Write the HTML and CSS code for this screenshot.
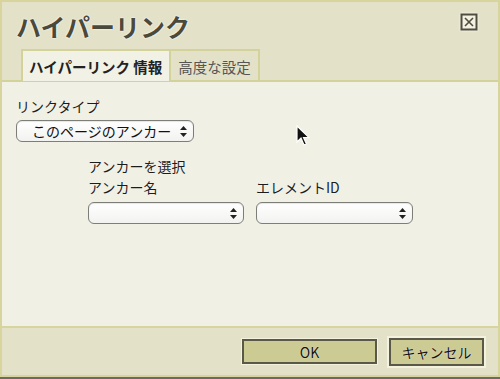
FILE: index.html
```html
<!DOCTYPE html>
<html lang="ja">
<head>
    <meta charset="UTF-8">
    <title>ハイパーリンク</title>
    <link rel="stylesheet" href="styles.css">
</head>
<body>
    <div class="dialog">
        <div class="header">
            <div class="title-row">
                <h1 class="title">ハイパーリンク</h1>
                <button class="close" title="閉じる">
                    <svg width="18" height="18" viewBox="0 0 18 18">
                        <rect x="1.5" y="1.5" width="15" height="15" fill="#f2f1e2" stroke="#4e4d3e" stroke-width="2"/>
                        <path d="M5 5 L13 13 M13 5 L5 13" stroke="#4e4d3e" stroke-width="1.6"/>
                    </svg>
                </button>
            </div>
            <div class="tabs">
                <div class="tab active">ハイパーリンク 情報</div>
                <div class="tab">高度な設定</div>
            </div>
        </div>

        <div class="panel">
            <label class="label">リンクタイプ</label>
            <div class="select select-type">
                <span>このページのアンカー</span>
                <svg class="arrows" width="7" height="11" viewBox="0 0 7 11"><path d="M3.5 0 L7 4 L0 4 Z M3.5 11 L7 7 L0 7 Z" fill="#222"/></svg>
            </div>

            <div class="anchor">
                <div class="label">アンカーを選択</div>
                <div class="anchor-grid">
                    <div class="field">
                        <label class="label">アンカー名</label>
                        <div class="select">
                            <span></span>
                            <svg class="arrows" width="7" height="11" viewBox="0 0 7 11"><path d="M3.5 0 L7 4 L0 4 Z M3.5 11 L7 7 L0 7 Z" fill="#222"/></svg>
                        </div>
                    </div>
                    <div class="field">
                        <label class="label">エレメントID</label>
                        <div class="select">
                            <span></span>
                            <svg class="arrows" width="7" height="11" viewBox="0 0 7 11"><path d="M3.5 0 L7 4 L0 4 Z M3.5 11 L7 7 L0 7 Z" fill="#222"/></svg>
                        </div>
                    </div>
                </div>
            </div>

            <svg class="cursor" width="14" height="22" viewBox="0 0 14 22">
                <path d="M1 1 L1 17 L5 13 L8 20 L10.5 19 L7.5 12.5 L13 12.5 Z" fill="#111" stroke="#fff" stroke-width="1.2"/>
            </svg>
        </div>

        <div class="footer">
            <button class="btn btn-ok">OK</button>
            <button class="btn btn-cancel">キャンセル</button>
        </div>
    </div>
</body>
</html>
```

FILE: styles.css
```css
body {
    margin: 0;
    background-color: #6b6b63;
    font-family: "Noto Sans CJK JP", "Liberation Sans", sans-serif;
    color: #222;
}
.dialog {
    width: 500px;
    height: 377px;
    box-sizing: border-box;
    border: 2px solid #d7d59d;
    background-color: #e3e2c8;
    display: flex;
    flex-direction: column;
}
.header {
    height: 78px;
    display: flex;
    flex-direction: column;
    justify-content: space-between;
}
.title-row {
    display: flex;
    justify-content: space-between;
    align-items: flex-start;
    padding: 8px 20px 0 14px;
}
.title {
    margin: 0;
    font-size: 25px;
    line-height: 32px;
    font-weight: bold;
    color: #4a493a;
    text-shadow: 0 0 2px #fff, 0 0 1px #fff;
}
.close {
    margin-top: 3px;
    padding: 0;
    border: none;
    background: none;
    width: 18px;
    height: 18px;
    filter: drop-shadow(0 0 1px #fff);
}
.tabs {
    display: flex;
    padding-left: 19px;
    margin-bottom: -1px;
}
.tab {
    height: 31px;
    box-sizing: border-box;
    padding: 4px 7px 0;
    border: 2px solid #d4d29b;
    border-left-width: 1px;
    border-bottom: none;
    font-size: 14.5px;
    line-height: 24px;
    color: #555;
    background-color: #e3e2c8;
}
.tab.active {
    border-left-width: 2px;
    border-right-width: 1px;
    background-color: #f2f1e6;
    color: #222;
    font-weight: bold;
    position: relative;
    z-index: 1;
    height: 32px;
    padding-left: 6px;
    padding-right: 7px;
}
.panel {
    position: relative;
    flex: 1;
    background-color: #f1f0e4;
    border-top: 2px solid #d4d29b;
    border-bottom: 2px solid #d7d59d;
    padding: 14px 14px 0;
}
.label {
    display: block;
    font-size: 14px;
    line-height: 21px;
    color: #1c1c1c;
    text-shadow: 0 0 1px #fff;
}
.select {
    display: flex;
    justify-content: space-between;
    align-items: center;
    height: 22px;
    box-sizing: border-box;
    border: 1px solid #7e7e78;
    border-radius: 6px;
    background: linear-gradient(#ffffff, #f2f2f0);
    padding: 0 6px 0 15px;
    font-size: 14px;
    color: #111;
    box-shadow: inset 0 1px 1px rgba(0, 0, 0, 0.1);
}
.select-type {
    width: 178px;
    margin-top: 3px;
}
.anchor {
    margin-left: 72px;
    margin-top: 14px;
}
.anchor-grid {
    display: grid;
    grid-template-columns: 156px 157px;
    gap: 12px;
}
.field .select {
    margin-top: 4px;
}
.cursor {
    position: absolute;
    left: 294px;
    top: 43px;
}
.footer {
    height: 47px;
    display: flex;
    justify-content: flex-end;
    align-items: center;
    gap: 12px;
    padding-right: 14px;
}
.btn {
    font-family: "Noto Sans CJK JP", "Liberation Sans", sans-serif;
    font-size: 14px;
    color: #111;
    background-color: #cdcb94;
    border: 2px solid #5a5949;
    padding: 0;
    height: 25px;
    text-shadow: 0 0 1px #fff;
}
.btn-ok {
    width: 135px;
    box-shadow: 0 0 0 1px #f3f2dc;
}
.btn-cancel {
    width: 95px;
    height: 28px;
    box-shadow: 0 0 0 2px #f3f2dc;
}
```
